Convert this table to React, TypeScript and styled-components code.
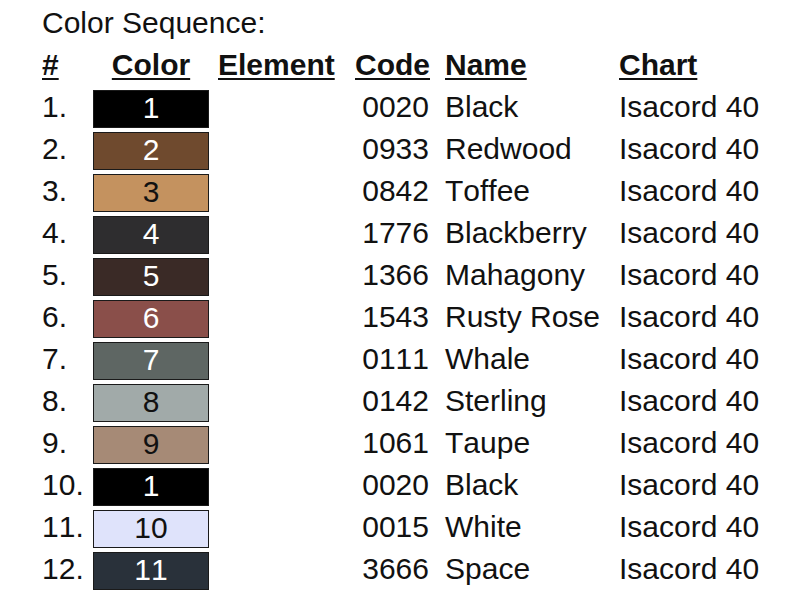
import React from "react";
import styled, { createGlobalStyle } from "styled-components";

const Global = createGlobalStyle`
  html, body { margin: 0; padding: 0; background: #ffffff; }
  body { font-family: "Liberation Sans", Arial, sans-serif; color: #111; font-kerning: none; }
`;

const Page = styled.div`
  padding: 2px 0 0 42px;
  font-size: 30px;
  line-height: 42px;
`;

const Title = styled.div`
  height: 42px;
`;

const Row = styled.div`
  display: grid;
  grid-template-columns: 51px 116px 146px 74px 190px 1fr;
  height: 42px;
  white-space: nowrap;
`;

const Head = styled.div<{ $align?: "left" | "center" | "right"; $pad?: number }>`
  font-weight: bold;
  text-decoration: underline;
  text-decoration-thickness: 2px;
  text-underline-offset: 3px;
  text-align: ${(p) => p.$align ?? "left"};
  padding-left: ${(p) => p.$pad ?? 0}px;
`;

const Cell = styled.div<{ $align?: "left" | "right"; $pad?: number }>`
  text-align: ${(p) => p.$align ?? "left"};
  padding-left: ${(p) => p.$pad ?? 0}px;
`;

const Swatch = styled.div<{ $bg: string; $fg: string }>`
  box-sizing: border-box;
  margin-top: 4px;
  height: 38px;
  line-height: 34px;
  border: 1px solid #1a1a1a;
  background: ${(p) => p.$bg};
  color: ${(p) => p.$fg};
  text-align: center;
`;

type Item = { sw: string; bg: string; fg: string; code: string; name: string };

const items: Item[] = [
  { sw: "1", bg: "#000000", fg: "#ffffff", code: "0020", name: "Black" },
  { sw: "2", bg: "#6f4a2e", fg: "#ffffff", code: "0933", name: "Redwood" },
  { sw: "3", bg: "#c4925f", fg: "#111111", code: "0842", name: "Toffee" },
  { sw: "4", bg: "#2e2d2f", fg: "#ffffff", code: "1776", name: "Blackberry" },
  { sw: "5", bg: "#3a2a26", fg: "#ffffff", code: "1366", name: "Mahagony" },
  { sw: "6", bg: "#8a4f4a", fg: "#ffffff", code: "1543", name: "Rusty Rose" },
  { sw: "7", bg: "#5e6663", fg: "#ffffff", code: "0111", name: "Whale" },
  { sw: "8", bg: "#a1aaa9", fg: "#111111", code: "0142", name: "Sterling" },
  { sw: "9", bg: "#a68a76", fg: "#111111", code: "1061", name: "Taupe" },
  { sw: "1", bg: "#000000", fg: "#ffffff", code: "0020", name: "Black" },
  { sw: "10", bg: "#dfe3fb", fg: "#111111", code: "0015", name: "White" },
  { sw: "11", bg: "#29313a", fg: "#ffffff", code: "3666", name: "Space" },
];

export default function App() {
  return (
    <>
      <Global />
      <Page>
        <Title>Color Sequence:</Title>
        <Row>
          <Head>#</Head>
          <Head $align="center">Color</Head>
          <Head $pad={9}>Element</Head>
          <Head>Code</Head>
          <Head $pad={16}>Name</Head>
          <Head>Chart</Head>
        </Row>
        {items.map((it, i) => (
          <Row key={i}>
            <Cell>{i + 1}.</Cell>
            <Swatch $bg={it.bg} $fg={it.fg}>
              {it.sw}
            </Swatch>
            <Cell />
            <Cell $align="right">{it.code}</Cell>
            <Cell $pad={16}>{it.name}</Cell>
            <Cell>Isacord 40</Cell>
          </Row>
        ))}
      </Page>
    </>
  );
}
